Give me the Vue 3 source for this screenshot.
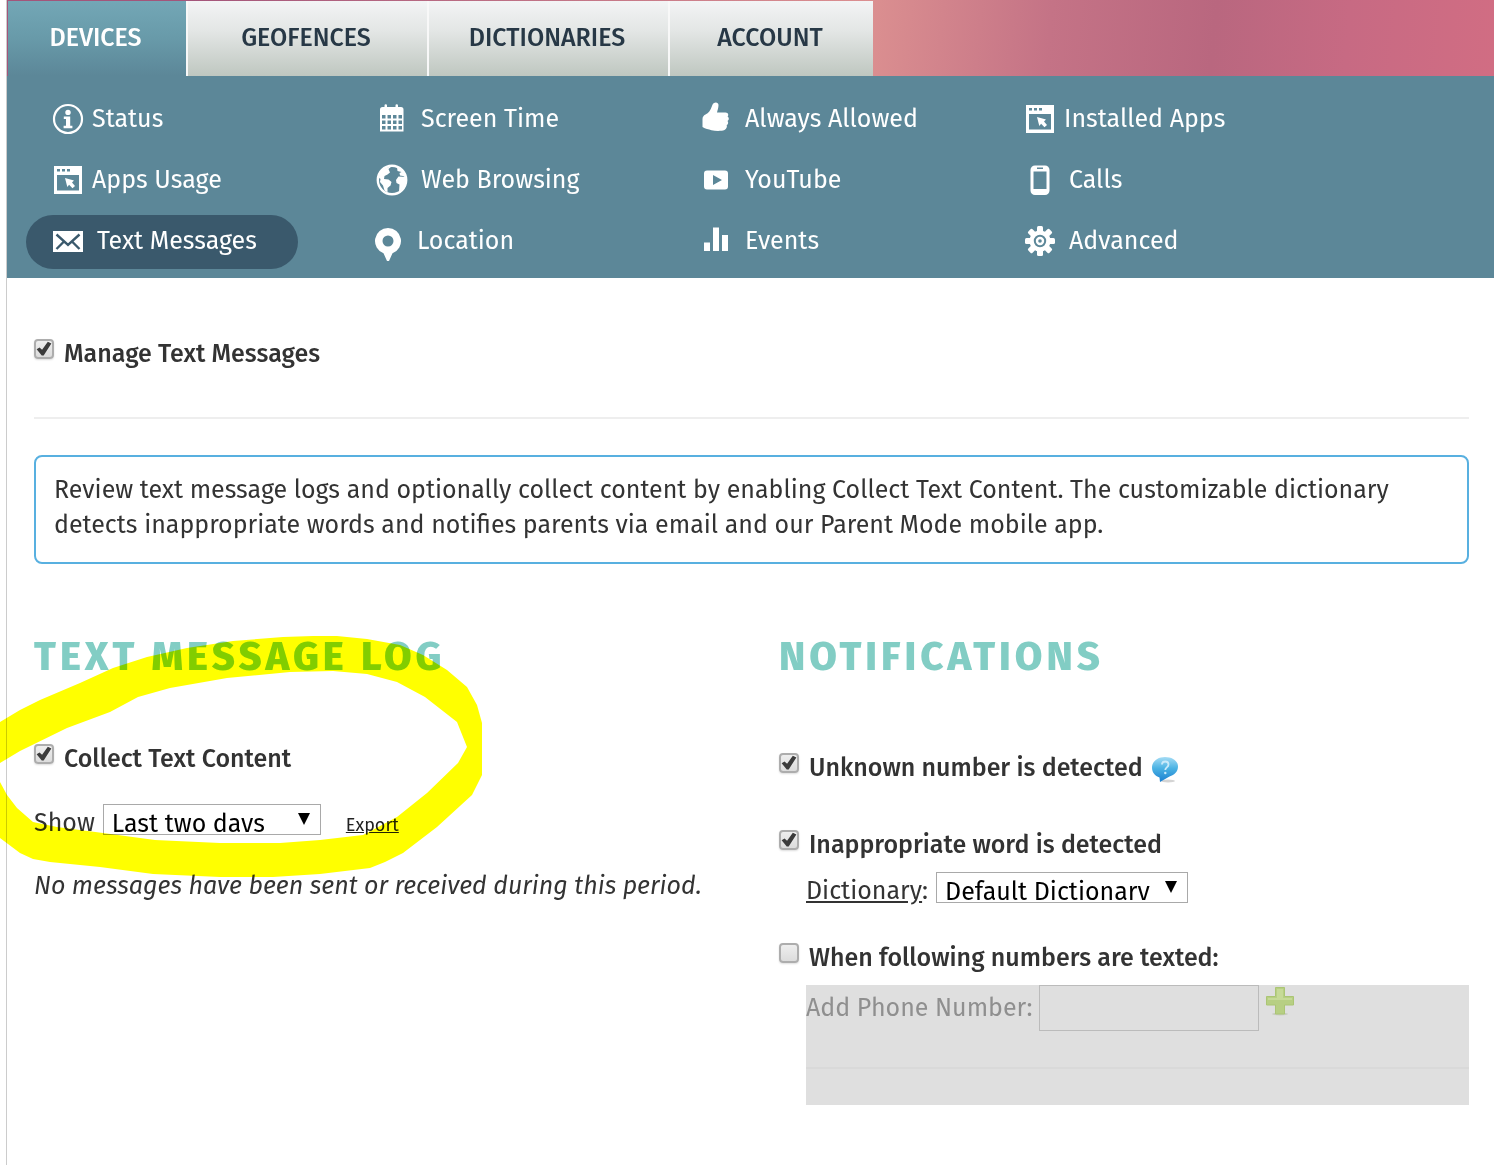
<template>
  <div class="page">
    <header class="hero">
      <nav class="tabs" aria-label="Main">
        <a
          v-for="tab in tabs"
          :key="tab.name"
          href="#"
          class="tab"
          :class="[tab.size, { active: tab.active }]"
        >{{ tab.name }}</a>
      </nav>
    </header>

    <nav class="subnav" aria-label="Devices">
      <a
        v-for="item in items"
        :key="item.name"
        href="#"
        class="item"
        :class="{ active: item.active, tight: item.tight, pinned: item.icon === 'pin' }"
      >
        <svg class="icon" viewBox="0 0 32 32" fill="#fff" aria-hidden="true">
          <g v-if="item.icon === 'info'">
            <circle cx="16" cy="16" r="14" fill="none" stroke="#fff" stroke-width="2.2" />
            <circle cx="16" cy="9.4" r="2.7" />
            <path d="M11.8 13.5h6.4v9.2h2.2v2.6h-8.8v-2.6H14v-6.6h-2.2z" />
          </g>
          <path
            v-else-if="item.icon === 'calendar'"
            fill-rule="evenodd"
            d="M6.500 4h2V2.500a1 1 0 0 1 2.500 0V4h8.500V2.500a1 1 0 0 1 2.500 0V4h3a2.500 2.500 0 0 1 2.500 2.500V28.500H4V6.500A2.500 2.500 0 0 1 6.500 4zM6 12v3.500h3.500V12zm5.500 0v3.500h3.500V12zm5.500 0v3.500h3.500V12zm5.500 0v3.500H26V12zM6 17.500V21h3.500v-3.500zm5.500 0V21h3.500v-3.500zm5.500 0V21h3.500v-3.500zm5.500 0V21H26v-3.500zM6 23v3.500h3.500V23zm5.500 0v3.500h3.500V23zm5.500 0v3.500h3.500V23zm5.500 0v3.500H26V23z"
          />
          <path
            v-else-if="item.icon === 'thumb'"
            d="M2.500 16c0-2 1-3.500 3-4.500 3-1 5-4.500 6.500-8.500C13-1.500 18.500-1.500 18.500 2c0 3-1 5-1.500 7.500h8.500c3 0 3.400 3 2 4.200 1.800.6 1.700 3.600 0 4.200 1.200 1 .7 3.500-.8 4.200.6 1.800-.2 4.200-2.200 4.900-3 1.200-9 1.200-13 .2-3-1.200-6-1.200-9-3.200z"
          />
          <g v-else-if="item.icon === 'window'">
            <path fill-rule="evenodd" d="M2 2h28v28H2zM5 11v15.500h22V11z" />
            <path d="M5 5h3v2.500H5zm5 0h3v2.500h-3zm5 0h3v2.500h-3z" fill="#5c8798" />
            <path d="M13 14l9 2.600-2 1.800 3 3.600-2.500 2.200-3.400-3.400-1.800 2.200z" />
          </g>
          <g v-else-if="item.icon === 'globe'">
            <circle cx="16" cy="16" r="14.2" fill="none" stroke="#fff" stroke-width="2.400" />
            <path d="M6 5.500L16 2l-3.500 3 1.500 3.500-2.500 2-3 1.500-.5 3 4.500.5 3 2.500-1 3.500-3 2.500v4.500l-3-2-1.500-5-3-3.500.5-3-2.500-2z" />
            <path d="M21 3l6.500 4.500 2.500 6-3-1.500-3-.5-.5-2.500 2-1-4-1z" />
            <path d="M20 16l2.500-3.500 7.500.5v6l-3 6-4 2.500.5-7-3-1.500z" />
          </g>
          <path
            v-else-if="item.icon === 'play'"
            fill-rule="evenodd"
            d="M7 6.500h18a3 3 0 0 1 3 3v13a3 3 0 0 1-3 3H7a3 3 0 0 1-3-3v-13a3 3 0 0 1 3-3zM13 11v10l9-5z"
          />
          <path
            v-else-if="item.icon === 'phone'"
            fill-rule="evenodd"
            d="M11 1.500h10a4.500 4.500 0 0 1 4.500 4.500v20.500a4.500 4.500 0 0 1-4.500 4.500H11a4.500 4.500 0 0 1-4.500-4.500V6A4.500 4.500 0 0 1 11 1.500zM9.500 7.500V25h13V7.500zM13 3.500v1.500h6V3.500z"
          />
          <g v-else-if="item.icon === 'mail'">
            <path d="M1 6h30v21H1z" />
            <path
              d="M4.500 9.500L16 20 27.500 9.500M4.500 24l8-8M27.500 24l-8-8"
              fill="none"
              stroke="#3a596c"
              stroke-width="2.400"
            />
          </g>
          <path
            v-else-if="item.icon === 'pin'"
            fill-rule="evenodd"
            d="M16 3a13 13 0 0 1 4.500 25.200L17 36h-2l-3.500-7.800A13 13 0 0 1 16 3zm0 7.500a5.500 5.500 0 1 0 0 11 5.500 5.500 0 0 0 0-11z"
          />
          <path v-else-if="item.icon === 'bars'" d="M4 17.500h6V26H4zM13 2.500h6V26h-6zM22 10h6v16h-6z" />
          <g v-else>
            <rect
              v-for="n in 4"
              :key="n"
              x="13"
              y="1"
              width="6"
              height="30"
              rx="1.500"
              :transform="`rotate(${n * 45} 16 16)`"
            />
            <circle cx="16" cy="16" r="10.500" />
            <circle cx="16" cy="16" r="5.200" fill="none" stroke="#5c8798" stroke-width="2" />
            <circle cx="16" cy="16" r="1.800" fill="#5c8798" />
          </g>
        </svg>
        <span>{{ item.name }}</span>
      </a>
    </nav>

    <main class="content">
      <label class="check">
        <input v-model="manage" type="checkbox" />
        <span>Manage Text Messages</span>
      </label>

      <hr class="rule" />

      <p class="info">
        Review text message logs and optionally collect content by enabling Collect Text Content. The customizable dictionary detects inappropriate words and notifies parents via email and our Parent Mode mobile app.
      </p>

      <div class="columns">
        <section class="log">
          <h2>Text Message Log</h2>
          <label class="check">
            <input v-model="collect" type="checkbox" />
            <span>Collect Text Content</span>
          </label>
          <div class="row show">
            <label for="period">Show</label>
            <span class="select period">
              <select id="period" v-model="period">
                <option>Last two days</option>
                <option>Last week</option>
              </select>
            </span>
            <a href="#" class="export">Export</a>
          </div>
          <p class="empty">No messages have been sent or received during this period.</p>

          <!-- highlighter stroke -->
          <svg class="marker" viewBox="0 636 482 242" aria-hidden="true">
            <path
              fill="#ff0"
              d="M0 722L20 710 40 700 80 683 113 668 147 657 187 648 233 641 283 637 313 636H337L367 639 400 645 423 655 447 670 467 687 477 705 482 723V775L472 795 437 827 403 853 385 862 370 868 320 874 273 877H220L153 874 100 867 50 862 33 859 20 853 0 838V782L7 795 17 808 33 822 57 827 103 833 155 840 220 843H280L320 840 363 835 397 817 427 793 458 763 467 747 457 722 425 697 397 682 367 674 333 671 290 672 227 678 170 688 138 697 110 712 67 728 20 751 0 763z"
            />
          </svg>
        </section>

        <section class="notifications">
          <h2>Notifications</h2>
          <div class="row">
            <label class="check">
              <input v-model="unknown" type="checkbox" />
              <span>Unknown number is detected</span>
            </label>
            <svg class="help" viewBox="0 0 28 28" role="img" aria-label="Help">
              <defs>
                <linearGradient id="bubble" x1="0" y1="0" x2="0" y2="1">
                  <stop offset="0" stop-color="#a5dcf5" />
                  <stop offset="0.45" stop-color="#4bb3e4" />
                  <stop offset="1" stop-color="#1b7fd0" />
                </linearGradient>
              </defs>
              <ellipse cx="17" cy="25" rx="7" ry="1.500" fill="#d4d4d4" />
              <path fill="url(#bubble)" d="M14 1c7.500 0 13 4 13 9.500 0 5-3.500 8.500-8.500 10L9 26l-.5-4.500C4 20 1 16.500 1 11.500 1 5.500 6.500 1 14 1z" />
              <path d="M11 8.500c0-4 6.500-4 6.500 0 0 3-3.200 2.800-3.200 5.500" fill="none" stroke="#c9eafa" stroke-width="1.800" />
              <circle cx="14.300" cy="17" r="1.200" fill="#c9eafa" />
            </svg>
          </div>
          <label class="check inappropriate">
            <input v-model="inappropriate" type="checkbox" />
            <span>Inappropriate word is detected</span>
          </label>
          <div class="row dictionary">
            <label for="dictionary"><a href="#">Dictionary</a>:</label>
            <span class="select">
              <select id="dictionary" v-model="dictionary">
                <option>Default Dictionary</option>
              </select>
            </span>
          </div>
          <label class="check">
            <input v-model="texted" type="checkbox" />
            <span>When following numbers are texted:</span>
          </label>
          <div class="numbers">
            <div class="add">
              <label for="number">Add Phone Number:</label>
              <input id="number" type="text" :disabled="!texted" />
              <button type="button" aria-label="Add" :disabled="!texted">
                <svg viewBox="0 0 28 30" aria-hidden="true">
                  <ellipse cx="14" cy="28" rx="8" ry="1.500" fill="#c8ccc0" />
                  <path d="M9.500 1.500h9v9h9v8.500h-9v9h-9v-9h-9v-8.500h9z" fill="#b7cf83" stroke="#abc574" />
                  <path d="M11 3h6v9h9v2H2v-2h9z" fill="#c6da97" />
                </svg>
              </button>
            </div>
            <hr />
          </div>
        </section>
      </div>
    </main>
  </div>
</template>

<script setup>
import { ref } from 'vue'

const tabs = [
  { name: 'Devices', size: 'small', active: true },
  { name: 'Geofences', size: 'large' },
  { name: 'Dictionaries', size: 'large' },
  { name: 'Account', size: 'medium' },
]

const items = [
  { name: 'Status', icon: 'info', tight: true },
  { name: 'Screen Time', icon: 'calendar' },
  { name: 'Always Allowed', icon: 'thumb' },
  { name: 'Installed Apps', icon: 'window', tight: true },
  { name: 'Apps Usage', icon: 'window', tight: true },
  { name: 'Web Browsing', icon: 'globe' },
  { name: 'YouTube', icon: 'play' },
  { name: 'Calls', icon: 'phone' },
  { name: 'Text Messages', icon: 'mail', active: true },
  { name: 'Location', icon: 'pin' },
  { name: 'Events', icon: 'bars' },
  { name: 'Advanced', icon: 'gear' },
]

const manage = ref(true)
const collect = ref(true)
const period = ref('Last two days')
const unknown = ref(true)
const inappropriate = ref(true)
const dictionary = ref('Default Dictionary')
const texted = ref(false)
</script>

<style>
html {
  background: #fff;
}
</style>

<style scoped>
.page {
  box-sizing: border-box;
  min-height: 100vh;
  margin-left: 6px;
  border-left: 1px solid #ccc;
  font-family: 'Fira Sans', Roboto, 'Liberation Sans', sans-serif;
  font-size: 25px;
  line-height: 30px;
  color: #333;
}

/* Tabs */
.hero {
  padding: 1px 0 0 1px;
  background: linear-gradient(95deg, #a3557a 0%, #a3557a 12%, #db8f90 58%, #c47386 70%, #b9677f 81%, #c76a83 90%, #d16d83 100%);
}

.tabs {
  display: flex;
}

.tab {
  box-sizing: border-box;
  height: 75px;
  padding: 0 3px 2px 0;
  display: flex;
  align-items: center;
  justify-content: center;
  border-left: 2px solid #f8f8f8;
  background: linear-gradient(#f3f4f5, #e3e6e5 40%, #bfc7c0);
  color: #273846;
  font-weight: 500;
  text-transform: uppercase;
  text-decoration: none;
}

.tab.small {
  width: 178px;
}

.tab.large {
  width: 241px;
}

.tab.medium {
  width: 205px;
}

.tab.active {
  border-left: 0;
  background: linear-gradient(#73a7b6, #689aa9 50%, #5c8798);
  color: #fff;
}

/* Second level menu */
.subnav {
  display: grid;
  grid-template-columns: repeat(4, minmax(272px, 324px));
  row-gap: 7px;
  padding: 17px 0 9px 19px;
  background: #5c8798;
}

.item {
  box-sizing: border-box;
  width: 272px;
  height: 54px;
  padding: 0 0 3px 26px;
  display: flex;
  align-items: center;
  gap: 13px;
  border-radius: 27px;
  color: #fff;
  text-decoration: none;
  white-space: nowrap;
}

.item.tight {
  gap: 8px;
}

.item.active {
  background: #3a596c;
}

.item.pinned {
  padding-left: 22px;
}

.icon {
  width: 32px;
  height: 32px;
  flex-shrink: 0;
  overflow: visible;
}

/* Content */
.content {
  padding: 61px 25px 60px 27px;
}

.check {
  display: flex;
  gap: 10px;
  font-weight: 500;
}

.check input {
  appearance: none;
  box-sizing: border-box;
  width: 20px;
  height: 20px;
  margin: 0;
  flex-shrink: 0;
  border: 2px solid #adadad;
  border-radius: 4px;
  background: linear-gradient(#eee, #dcdcdc);
  box-shadow: 0 1px 2px #ddd;
}

.check input:checked::before {
  content: '';
  display: block;
  width: 16px;
  height: 16px;
  background: #3b3b3b;
  clip-path: polygon(4% 52%, 22% 40%, 38% 54%, 74% 4%, 96% 16%, 48% 90%, 36% 90%);
}

.rule {
  height: 2px;
  margin: 48px 0 36px;
  border: 0;
  background: #eee;
}

.info {
  margin: 0;
  padding: 16px 18px 19px;
  border: 2px solid #58b0e0;
  border-radius: 8px;
  line-height: 35px;
}

.columns {
  display: grid;
  grid-template-columns: 1fr 1fr;
  column-gap: 55px;
  margin-top: 72px;
}

h2 {
  margin: 0 0 66px;
  font-size: 40px;
  font-weight: 800;
  line-height: 42px;
  letter-spacing: 4px;
  color: #82cdc4;
  text-transform: uppercase;
}

.row {
  display: flex;
  gap: 8px;
}

.log {
  position: relative;
}

.show {
  margin-top: 30px;
  line-height: 38px;
  height: 31px;
}

.select {
  position: relative;
  display: block;
  width: 252px;
  height: 31px;
}

.select.period {
  width: 218px;
}

.select select {
  appearance: none;
  box-sizing: border-box;
  width: 100%;
  height: 31px;
  margin: 0;
  padding: 4px 30px 2px 8px;
  display: block;
  border: 1px solid #a9a9a9;
  border-radius: 0;
  background: #fff;
  color: #000;
  font: inherit;
  line-height: 30px;
}

.select::after {
  content: '';
  position: absolute;
  top: 9px;
  right: 11px;
  border: 6px solid transparent;
  border-top: 12px solid #000;
  border-bottom: 0;
  pointer-events: none;
}

.export {
  margin-left: 17px;
  padding-top: 2px;
  font-size: 18px;
  color: #222;
}

.empty {
  margin: 33px 0 0;
  line-height: 36px;
  font-style: italic;
}

.marker {
  position: absolute;
  top: 0;
  left: -34px;
  width: 482px;
  height: 242px;
  mix-blend-mode: multiply;
  pointer-events: none;
}

.notifications h2 {
  margin-bottom: 75px;
}

.help {
  width: 28px;
  height: 28px;
  padding-top: 3px;
}

.inappropriate {
  margin-top: 46px;
}

.dictionary {
  margin: 12px 0 40px 27px;
  height: 31px;
  line-height: 38px;
}

.dictionary a {
  color: #333;
}

.numbers {
  height: 120px;
  margin: 12px 0 0 27px;
  background: #dfdfdf;
  color: #8f8f8f;
}

.add {
  display: flex;
  gap: 7px;
  line-height: 46px;
}

.add input {
  box-sizing: border-box;
  width: 220px;
  height: 46px;
  border: 1px solid #bbb;
  background: transparent;
  font: inherit;
}

.add button {
  width: 28px;
  height: 30px;
  margin-top: 1px;
  padding: 0;
  border: 0;
  background: none;
}

.add svg {
  display: block;
}

.numbers hr {
  height: 2px;
  margin: 36px 0 0;
  border: 0;
  background: #d9d9d9;
}
</style>
